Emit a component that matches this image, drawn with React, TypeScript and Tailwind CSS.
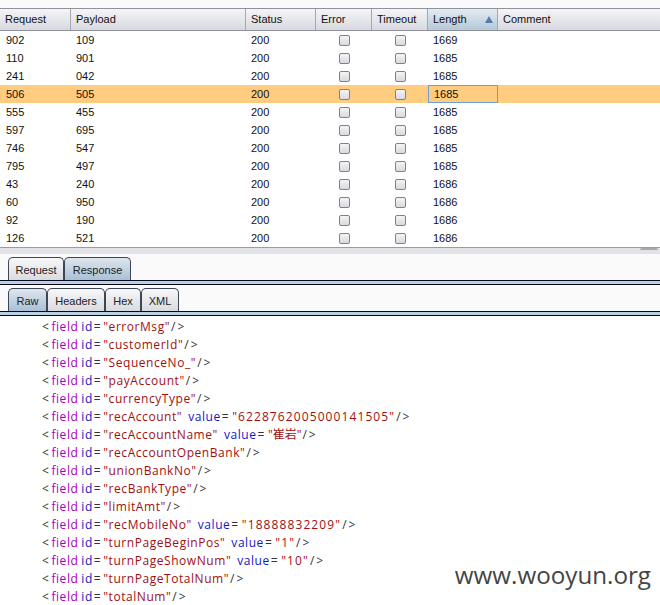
const ROWS = [
  ["902", "109", "1669"],
  ["110", "901", "1685"],
  ["241", "042", "1685"],
  ["506", "505", "1685"],
  ["555", "455", "1685"],
  ["597", "695", "1685"],
  ["746", "547", "1685"],
  ["795", "497", "1685"],
  ["43", "240", "1686"],
  ["60", "950", "1686"],
  ["92", "190", "1686"],
  ["126", "521", "1686"],
];

const FIELDS: { id: string; value?: string; cjk?: boolean }[] = [
  { id: "errorMsg" },
  { id: "customerId" },
  { id: "SequenceNo_" },
  { id: "payAccount" },
  { id: "currencyType" },
  { id: "recAccount", value: "6228762005000141505" },
  { id: "recAccountName", value: "崔岩", cjk: true },
  { id: "recAccountOpenBank" },
  { id: "unionBankNo" },
  { id: "recBankType" },
  { id: "limitAmt" },
  { id: "recMobileNo", value: "18888832209" },
  { id: "turnPageBeginPos", value: "1" },
  { id: "turnPageShowNum", value: "10" },
  { id: "turnPageTotalNum" },
  { id: "totalNum" },
];

const COLUMNS = [
  { label: "Request", width: "w-[71px]" },
  { label: "Payload", width: "w-[175px]" },
  { label: "Status", width: "w-[70px]" },
  { label: "Error", width: "w-[56px]" },
  { label: "Timeout", width: "w-[56px]" },
];

function Checkbox() {
  return (
    <span className="block h-[11px] w-[11px] rounded-[2px] border border-[#7f8288] bg-gradient-to-b from-[#f4f4f6] to-[#d8dade]" />
  );
}

function Tab({ label, active, width }: { label: string; active?: boolean; width: string }) {
  return (
    <div
      className={`flex h-[23px] items-center justify-center rounded-t-[5px] border border-b-0 border-[#3d4654] pt-[2px] ${width} ${
        active ? "bg-gradient-to-b from-[#dfe6ee] to-[#a9c0d6]" : "bg-gradient-to-b from-[#f8f8f9] to-[#d9dbe0]"
      }`}
    >
      {label}
    </div>
  );
}

export default function App() {
  return (
    <div className="relative h-[605px] w-[660px] overflow-hidden bg-white font-['Liberation_Sans',sans-serif] text-[11px] text-[#111]">
      <div className="h-2 bg-[#fafafa]" />

      <div className="flex h-[23px] border-y border-y-[#8f929c] bg-gradient-to-b from-[#f5f5f7] to-[#d8d9df]">
        {COLUMNS.map((col) => (
          <div key={col.label} className={`flex items-center border-r border-[#a5a7b0] pl-[5px] ${col.width}`}>
            {col.label}
          </div>
        ))}
        <div className="flex w-[70px] items-center justify-between border-r border-[#a5a7b0] bg-gradient-to-b from-[#e4ebf1] to-[#b4c8da] pl-[5px] pr-[3px]">
          Length
          <svg width="8" height="7" viewBox="0 0 8 7" className="mr-[1px]">
            <path d="M4 0 L8 7 L0 7 Z" fill="#4f7eab" />
          </svg>
        </div>
        <div className="flex flex-1 items-center pl-[5px]">Comment</div>
      </div>

      <div className="h-[216px]">
        {ROWS.map((row, i) => (
          <div key={row[0]} className={`flex h-[18px] items-center ${i === 3 ? "bg-[#ffcc80]" : ""}`}>
            <div className="w-[71px] pl-[6px]">{row[0]}</div>
            <div className="w-[175px] pl-[5px]">{row[1]}</div>
            <div className="w-[70px] pl-[5px]">200</div>
            <div className="flex w-[56px] justify-center"><Checkbox /></div>
            <div className="flex w-[56px] justify-center"><Checkbox /></div>
            <div className={`flex h-[18px] w-[70px] items-center pl-[5px] ${i === 3 ? "border border-[#6d9fd0]" : ""}`}>
              {row[2]}
            </div>
          </div>
        ))}
      </div>

      <div className="border-t border-[#9b9ca3]">
        <div className="flex h-[6px] justify-end bg-[#e2e3e7] pr-[2px]">
          <div className="h-[2px] w-[18px] rounded-t-sm bg-[#a7a9b0]" />
        </div>
      </div>

      <div className="bg-[#fafafa]">
        <div className="flex h-[26px] items-end pl-2 text-[#222]">
          <Tab label="Request" width="w-[56px]" />
          <Tab label="Response" active width="w-[67px]" />
        </div>
      </div>
      <div className="h-[5px] border-y border-[#05071a] bg-[#bcd0e4]" />

      <div className="bg-[#fafafa]">
        <div className="flex h-[26px] items-end pl-2 text-[#222]">
          <Tab label="Raw" active width="w-[39px]" />
          <Tab label="Headers" width="w-[58px]" />
          <Tab label="Hex" width="w-[36px]" />
          <Tab label="XML" width="w-[38px]" />
        </div>
      </div>
      <div className="h-[5px] border-y border-[#05071a] bg-[#bcd0e4]" />

      <div className="pl-[42px] pt-[2px] font-['Open_Sans','Noto_Sans_CJK_SC',sans-serif] text-[12px] tracking-[0.55px]">
        {FIELDS.map((f) => (
          <div key={f.id} className="flex h-[18px] items-center whitespace-pre text-[#333]">
            <span>&lt;</span>
            <span className="ml-[2px] text-[#a800b8]">field</span>
            <span className="ml-[3px] text-[#1414c8]">id</span>
            <span className="ml-[1px]">=</span>
            <span className="ml-[2px] text-[#a01010]">"{f.id}"</span>
            {f.value && (
              <>
                <span className="ml-[6px] text-[#1414c8]">value</span>
                <span className="ml-[1px]">=</span>
                <span className={`ml-[3px] text-[#a01010] ${f.cjk ? "tracking-normal" : "tracking-[1.1px]"}`}>"{f.value}"</span>
              </>
            )}
            <span className="ml-[1px] tracking-[2px]">/&gt;</span>
          </div>
        ))}
      </div>

      <div className="absolute bottom-[15px] right-[9px] font-['Open_Sans',sans-serif] text-[24.2px] leading-[30px] text-[#444]">
        www.wooyun.org
      </div>
    </div>
  );
}
